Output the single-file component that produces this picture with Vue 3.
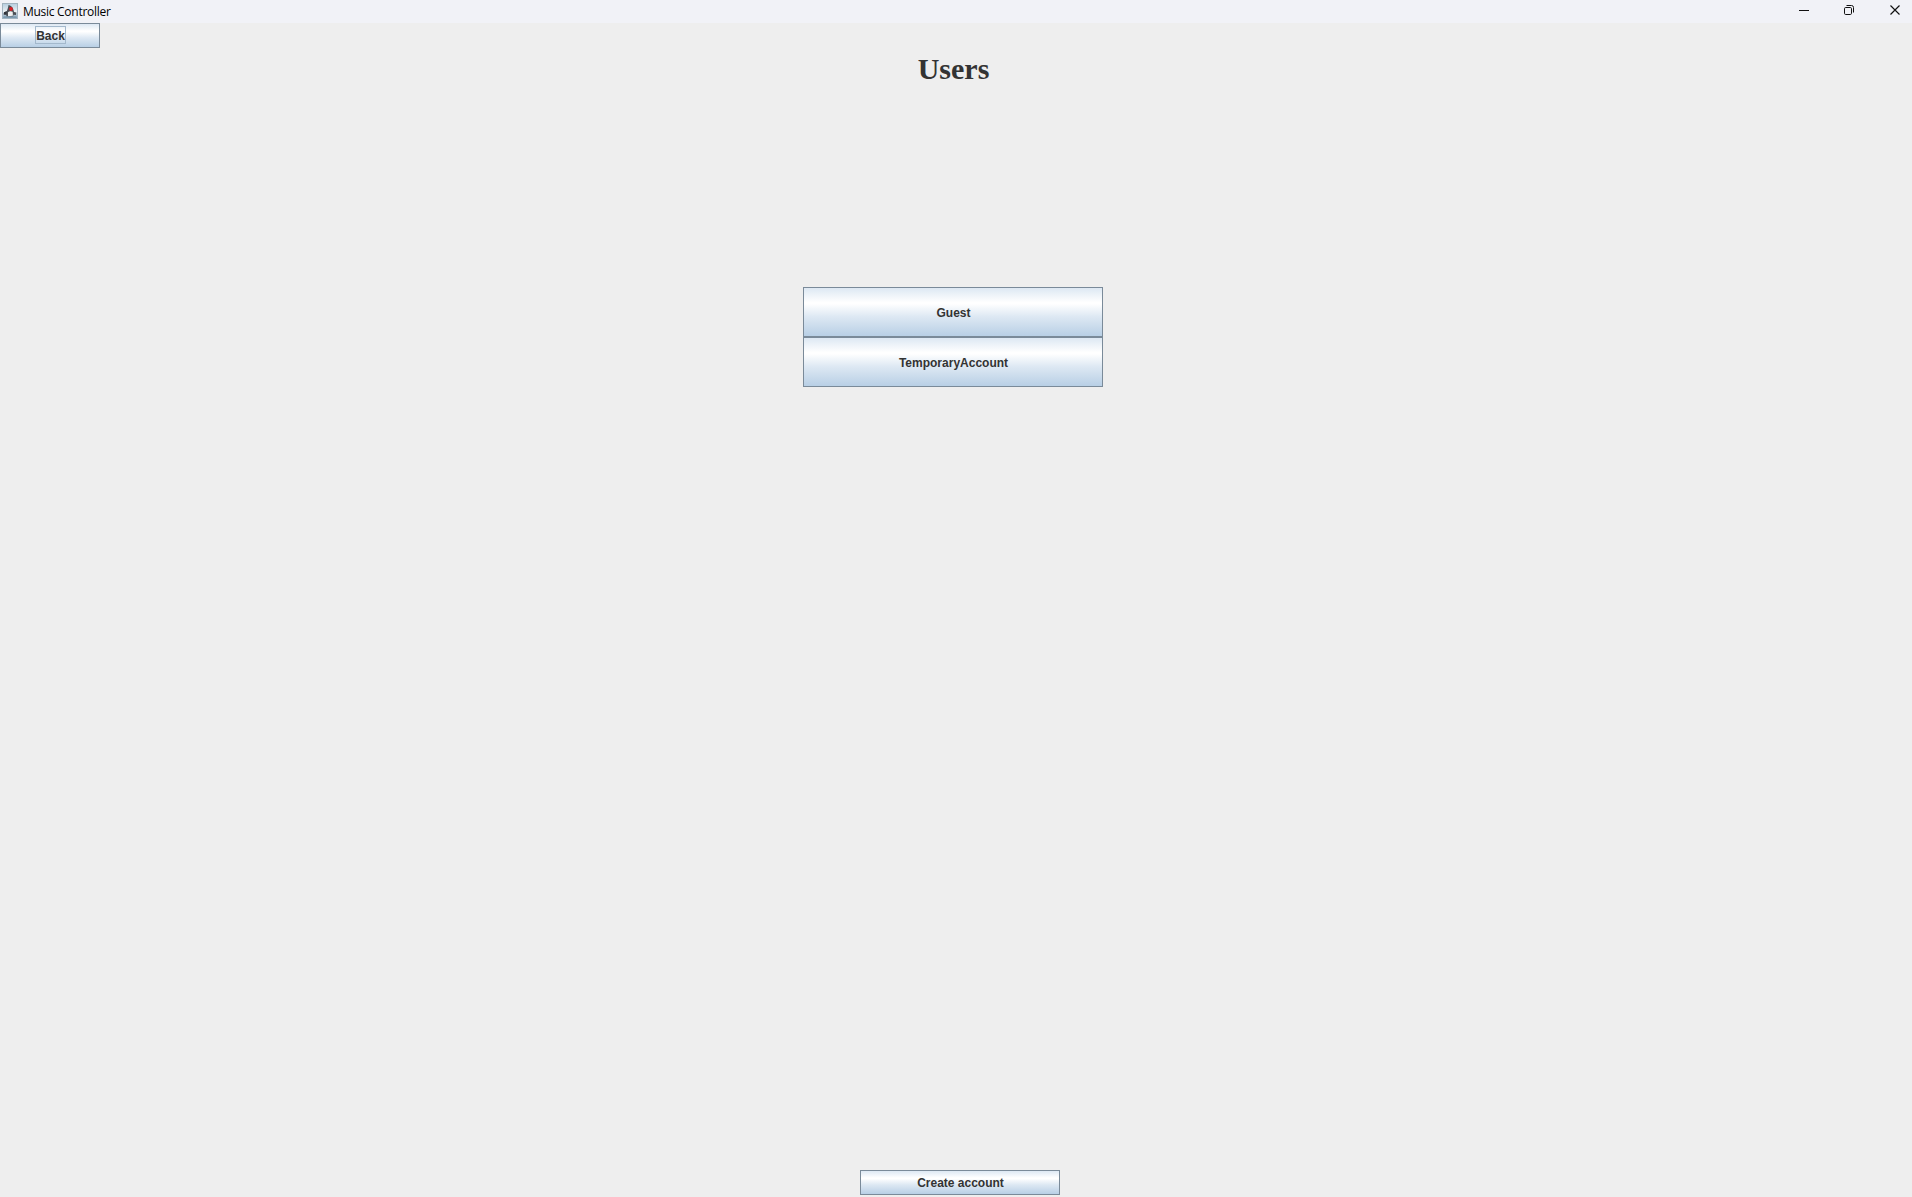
<script setup>
const users = ['Guest', 'TemporaryAccount']
</script>

<template>
  <div class="window">
    <header class="titlebar">
      <svg class="logo" width="16" height="16" viewBox="0 0 16 16">
        <defs>
          <linearGradient id="tile" x1="0" y1="0" x2="0" y2="1">
            <stop offset="0" stop-color="#b5cddf" />
            <stop offset=".55" stop-color="#edf1f4" />
            <stop offset="1" stop-color="#6f91ac" />
          </linearGradient>
        </defs>
        <rect x=".5" y=".5" width="15" height="15" fill="url(#tile)" stroke="#a3b3bf" />
        <path d="M6.5 2C8.5 2.2 11 4 11.5 7L12 9 14.3 9.5 14 12 11.5 11.7 11 13.5 4.5 13.5 4.2 11.7 1.7 11.5 2 9.2 4.8 8.2C5.8 6 6.2 4 6.5 2Z" fill="#4b4e54" />
        <path d="M6 9.2Q8 7.3 10.7 8.8L10.9 12.8 6 13.2Z" fill="#f1f1f1" />
        <path d="M2 9.2L4.8 8.3 4.3 11.5 1.8 11.4Z" fill="#303238" />
        <circle cx="9" cy="6" r="1.9" fill="#dd2027" />
        <path d="M2 14h12" stroke="#7895a9" />
      </svg>
      <span class="title">Music Controller</span>
      <svg class="controls" width="132" height="23" viewBox="0 0 132 23" fill="none" stroke="#111" stroke-width="1">
        <path d="M19 10.5h10" />
        <rect x="64.5" y="7.5" width="7" height="7" rx="1.2" />
        <path d="M66.5 5.5H71.5a2 2 0 0 1 2 2V12.5" />
        <path d="M110.5 5.5l9 9M119.5 5.5l-9 9" stroke-width="1.15" />
      </svg>
    </header>
    <button class="metal back"><span class="focus">Back</span></button>
    <h1>Users</h1>
    <main class="users">
      <button v-for="user in users" :key="user" class="metal user">{{ user }}</button>
    </main>
    <button class="metal create">Create account</button>
  </div>
</template>

<style>
body { margin: 0; overflow: hidden; }
</style>

<style scoped>
.window {
  width: 1912px;
  height: 1197px;
  background: #eee;
  display: flex;
  flex-direction: column;
  box-sizing: border-box;
  padding-bottom: 2px;
}
.titlebar {
  height: 23px;
  flex: none;
  display: flex;
  align-items: flex-start;
  background: #f1f2f7;
}
.logo { margin: 3px 0 0 2px; }
.title {
  margin-left: 5px;
  font: 12px/23px "Open Sans", "Noto Sans", sans-serif;
  letter-spacing: -.28px;
  color: #000;
}
.controls { margin-left: auto; }
.metal {
  box-sizing: border-box;
  flex: none;
  display: flex;
  align-items: center;
  justify-content: center;
  padding: 2px 0 0 1px;
  border: 1px solid #7a8a99;
  border-radius: 0;
  background: linear-gradient(#dde8f3 0%, #fff 30%, #fff 33%, #dde8f3 60%, #b8cfe5 100%);
  font: bold 12px/15px "Liberation Sans", Arial, sans-serif;
  color: #333;
}
.back {
  width: 100px;
  height: 25px;
  padding: 0 0 1px 1px;
}
.focus {
  box-sizing: border-box;
  width: 31px;
  height: 18px;
  line-height: 18px;
  border: 1px solid #a3b8cc;
  text-align: center;
}
h1 {
  width: 1907px;
  height: 45px;
  margin: 0;
  text-align: center;
  font: bold 30px/41px "Liberation Serif", "Times New Roman", serif;
  color: #333;
}
.users { margin: 194px 0 0 803px; flex: 1; }
.user { width: 300px; height: 50px; }
.create { width: 200px; height: 25px; margin-left: 860px; }
</style>
